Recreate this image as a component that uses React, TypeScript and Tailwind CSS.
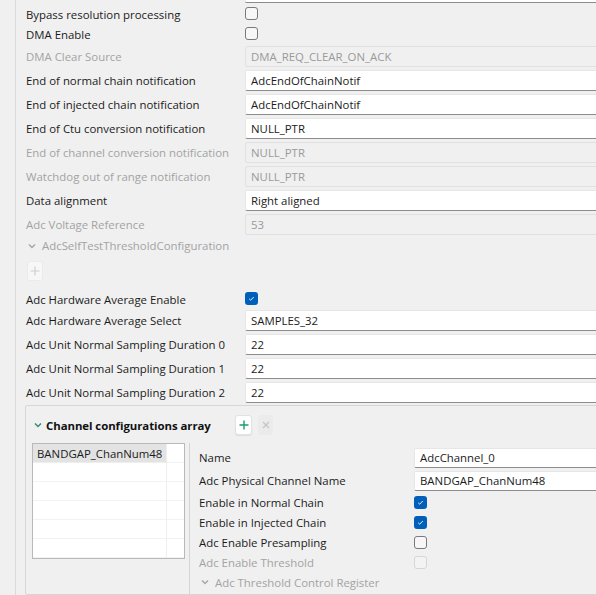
import React from 'react';

const Chevron: React.FC<{ color?: string }> = ({ color = '#a8a8a8' }) => (
  <svg width="8" height="6" viewBox="0 0 8 6" className="shrink-0">
    <path d="M1 1.5 L4 4.5 L7 1.5" fill="none" stroke={color} strokeWidth="1.5" />
  </svg>
);

const Label: React.FC<{ text: string; disabled?: boolean }> = ({ text, disabled }) => (
  <span className={disabled ? 'text-[#a3a3a3]' : 'text-[#1b1b1b]'}>{text}</span>
);

const TextField: React.FC<{ value: string; disabled?: boolean; h?: string }> = ({ value, disabled, h = 'h-[21px]' }) => (
  <div
    className={
      disabled
        ? `${h} flex items-center pt-[1px] px-[5px] border border-[#e0e0e0] rounded-[2px] bg-[#f0f0f0] text-[#9a9a9a]`
        : `${h} flex items-center pt-[1px] px-[5px] border border-[#e6e6e6] border-b-[#8c8c8c] rounded-[2px] bg-white text-[#1b1b1b]`
    }
  >
    {value}
  </div>
);

const Checkbox: React.FC<{ checked?: boolean; disabled?: boolean }> = ({ checked, disabled }) => {
  if (checked) {
    return (
      <div className="w-[13px] h-[13px] shrink-0 rounded-[3px] bg-[#005fb8] flex items-center justify-center">
        <svg width="13" height="13" viewBox="0 0 13 13">
          <path d="M4.2 6.8 L5.7 8.2 L8.8 5" fill="none" stroke="#ffffff" strokeWidth="0.9" />
        </svg>
      </div>
    );
  }
  return (
    <div
      className={
        disabled
          ? 'w-[13px] h-[13px] shrink-0 rounded-[3px] border border-[#d6d6d6] bg-[#f3f3f3]'
          : 'w-[13px] h-[13px] shrink-0 rounded-[3px] border border-[#7a7a7a] bg-[#f7f7f7]'
      }
    />
  );
};

// label cell; pt nudges the text so it sits like the original toolkit's
const LabelCell: React.FC<{ w: string; pt: string; text: string; disabled?: boolean }> = ({ w, pt, text, disabled }) => (
  <div className={`${w} ${pt} shrink-0`}>
    <Label text={text} disabled={disabled} />
  </div>
);

const InputRow: React.FC<{ label: string; value: string; disabled?: boolean }> = ({ label, value, disabled }) => (
  <div className="flex items-center h-6 pl-[10px]">
    <LabelCell w="w-[219px]" pt="pt-[1px]" text={label} disabled={disabled} />
    <div className="flex-1">
      <TextField value={value} disabled={disabled} />
    </div>
  </div>
);

const CheckRow: React.FC<{ label: string; checked?: boolean; disabled?: boolean }> = ({ label, checked, disabled }) => (
  <div className="flex items-center h-5 pl-[10px]">
    <LabelCell w="w-[219px]" pt="pt-[3px]" text={label} disabled={disabled} />
    <Checkbox checked={checked} disabled={disabled} />
  </div>
);

const SubInputRow: React.FC<{ label: string; value: string }> = ({ label, value }) => (
  <div className="flex items-center h-[23px]">
    <LabelCell w="w-[215px]" pt="pt-0" text={label} />
    <div className="flex-1">
      <TextField value={value} h="h-5" />
    </div>
  </div>
);

const SubCheckRow: React.FC<{ label: string; checked?: boolean; disabled?: boolean }> = ({ label, checked, disabled }) => (
  <div className="flex items-center h-5">
    <LabelCell w="w-[215px]" pt="pt-[1px]" text={label} disabled={disabled} />
    <Checkbox checked={checked} disabled={disabled} />
  </div>
);

export default function App() {
  const listRows = ['BANDGAP_ChanNum48', '', '', '', '', ''];

  return (
    <div className="w-[596px] h-[595px] overflow-hidden bg-[#f0f0f0] text-[11.4px] font-['Open_Sans','Noto_Sans',sans-serif] leading-none">
      <div className="flex w-[720px] h-full">
        {/* left gutter */}
        <div className="w-[16px] shrink-0 border-r border-[#dadada]" />

        <div className="flex-1 flex flex-col">
          {/* tail of the field above */}
          <div className="flex h-[3px] pl-[10px]">
            <div className="w-[219px] shrink-0" />
            <div className="flex-1 bg-white border-x border-b border-[#e6e6e6] border-b-[#8c8c8c]" />
          </div>

          <CheckRow label="Bypass resolution processing" />
          <CheckRow label="DMA Enable" />
          <div className="h-px" />
          <InputRow label="DMA Clear Source" value="DMA_REQ_CLEAR_ON_ACK" disabled />
          <InputRow label="End of normal chain notification" value="AdcEndOfChainNotif" />
          <InputRow label="End of injected chain notification" value="AdcEndOfChainNotif" />
          <InputRow label="End of Ctu conversion notification" value="NULL_PTR" />
          <InputRow label="End of channel conversion notification" value="NULL_PTR" disabled />
          <InputRow label="Watchdog out of range notification" value="NULL_PTR" disabled />
          <InputRow label="Data alignment" value="Right aligned" />
          <InputRow label="Adc Voltage Reference" value="53" disabled />

          <div className="flex items-center h-5 pl-[12px] gap-[6px]">
            <Chevron />
            <Label text="AdcSelfTestThresholdConfiguration" disabled />
          </div>

          <div className="h-8 pt-[5px] pl-[11px]">
            <div className="w-4 h-5 rounded-[3px] bg-[#f7f7f7] border border-[#ebebeb] flex items-center justify-center">
              <svg width="10" height="10" viewBox="0 0 10 10">
                <path d="M5 0.5 V9.5 M0.5 5 H9.5" stroke="#cfcfcf" strokeWidth="1.2" />
              </svg>
            </div>
          </div>

          <CheckRow label="Adc Hardware Average Enable" checked />
          <InputRow label="Adc Hardware Average Select" value="SAMPLES_32" />
          <InputRow label="Adc Unit Normal Sampling Duration 0" value="22" />
          <InputRow label="Adc Unit Normal Sampling Duration 1" value="22" />
          <InputRow label="Adc Unit Normal Sampling Duration 2" value="22" />

          {/* channel configurations group */}
          <div className="mt-px ml-[9px] flex-1 border border-[#d6d6d6] rounded-[2px] flex flex-col">
            <div className="h-[37px] flex items-center pl-[8px]">
              <Chevron color="#2f8f7a" />
              <div className="w-[193px] pl-[4px] pt-[2px] font-bold tracking-[-0.05px] text-[#111111]">Channel configurations array</div>
              <div className="flex gap-[6px]">
                <div className="w-[17px] h-5 rounded-[3px] bg-white border border-[#e2e2e2] shadow-[0_1px_1px_rgba(0,0,0,0.08)] flex items-center justify-center">
                  <svg width="10" height="10" viewBox="0 0 10 10">
                    <path d="M5 0.5 V9.5 M0.5 5 H9.5" stroke="#1f9a74" strokeWidth="1.4" />
                  </svg>
                </div>
                <div className="w-[15px] h-5 rounded-[3px] bg-[#ebebeb] flex items-center justify-center">
                  <svg width="8" height="8" viewBox="0 0 8 8">
                    <path d="M1 1 L7 7 M7 1 L1 7" stroke="#c4c4c4" strokeWidth="1.2" />
                  </svg>
                </div>
              </div>
            </div>

            <div className="flex flex-1 pl-[6px]">
              {/* list */}
              <div className="w-[153px] h-[116px] shrink-0 bg-white border border-[#b9b9b9] flex">
                <div className="w-[134px] flex flex-col border-r border-[#eeeeee]">
                  {listRows.map((r, i) => (
                    <div
                      key={i}
                      className={
                        i === 0
                          ? 'h-5 flex items-center px-[4px] bg-[#e3e3e3] text-[#1b1b1b] border-b border-[#eeeeee]'
                          : 'h-[19.5px] border-b border-[#f2f2f2]'
                      }
                    >
                      {r}
                    </div>
                  ))}
                </div>
                <div className="flex-1 flex flex-col">
                  {listRows.map((_, i) => (
                    <div key={i} className="h-[19.5px] border-b border-[#f2f2f2]" />
                  ))}
                </div>
              </div>

              <div className="ml-[4px] w-px bg-[#d4d4d4]" />

              {/* details */}
              <div className="flex-1 pl-[9px] pt-[3px] flex flex-col">
                <SubInputRow label="Name" value="AdcChannel_0" />
                <SubInputRow label="Adc Physical Channel Name" value="BANDGAP_ChanNum48" />
                <SubCheckRow label="Enable in Normal Chain" checked />
                <SubCheckRow label="Enable in Injected Chain" checked />
                <SubCheckRow label="Adc Enable Presampling" />
                <SubCheckRow label="Adc Enable Threshold" disabled />
                <div className="flex items-center h-5 pl-[2px] gap-[6px]">
                  <Chevron />
                  <div className="pt-[1px]">
                    <Label text="Adc Threshold Control Register" disabled />
                  </div>
                </div>
              </div>
            </div>
          </div>
        </div>
      </div>
    </div>
  );
}
